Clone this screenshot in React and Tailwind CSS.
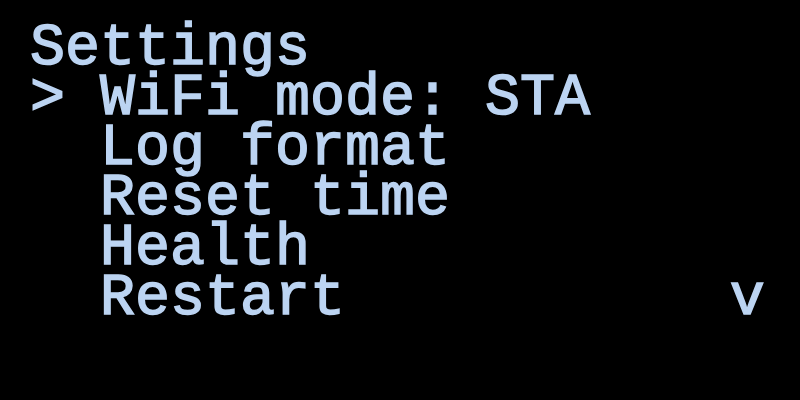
export default function App() {
  const lines = [
    "Settings",
    "> WiFi mode: STA",
    "  Log format",
    "  Reset time",
    "  Health",
    "  Restart           v",
  ];
  return (
    <div
      className="w-[800px] h-[400px] bg-black overflow-hidden pt-[24px] pl-[30px] text-[#bcd4f2] text-[58.32px] leading-[50px] font-normal [-webkit-text-stroke:1.5px_#bcd4f2]"
      style={{ fontFamily: '"Liberation Mono", "DejaVu Sans Mono", monospace' }}
    >
      {lines.map((l, i) => (
        <div key={i} className="whitespace-pre h-[50px]">
          {l}
        </div>
      ))}
    </div>
  );
}
